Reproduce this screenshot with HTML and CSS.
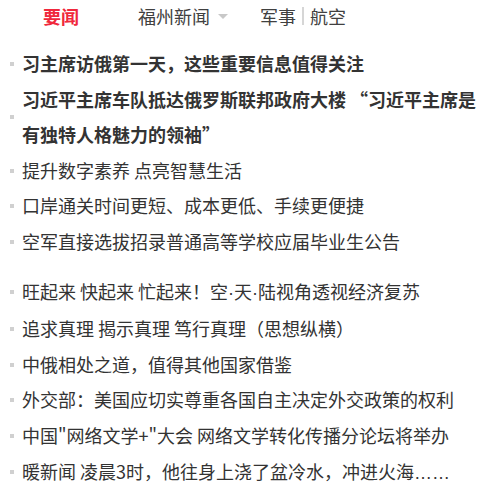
FILE: index.html
```html
<!DOCTYPE html>
<html lang="zh-CN">
<head>
<meta charset="utf-8">
<link rel="stylesheet" href="styles.css">
</head>
<body>
<div class="page">
  <div class="tabs">
    <span class="tab tab-active">要闻</span>
    <span class="tab tab-drop">福州新闻<span class="caret"></span></span>
    <span class="tab tab-pair">军事<span class="sep"></span>航空</span>
  </div>
  <ul class="news">
    <li class="item strong"><span class="dot"></span><span class="txt">习主席访俄第一天，这些重要信息值得关注</span></li>
    <li class="item strong"><span class="dot"></span><span class="txt">习近平主席车队抵达俄罗斯联邦政府大楼 “习近平主席是有独特人格魅力的领袖”</span></li>
    <li class="item"><span class="dot"></span><span class="txt">提升数字素养 点亮智慧生活</span></li>
    <li class="item"><span class="dot"></span><span class="txt">口岸通关时间更短、成本更低、手续更便捷</span></li>
    <li class="item"><span class="dot"></span><span class="txt">空军直接选拔招录普通高等学校应届毕业生公告</span></li>
  </ul>
  <ul class="news news-second">
    <li class="item"><span class="dot"></span><span class="txt">旺起来 快起来 忙起来！空<span class="latin">·</span>天<span class="latin">·</span>陆视角透视经济复苏</span></li>
    <li class="item"><span class="dot"></span><span class="txt">追求真理 揭示真理 笃行真理（思想纵横）</span></li>
    <li class="item"><span class="dot"></span><span class="txt">中俄相处之道，值得其他国家借鉴</span></li>
    <li class="item"><span class="dot"></span><span class="txt">外交部：美国应切实尊重各国自主决定外交政策的权利</span></li>
    <li class="item"><span class="dot"></span><span class="txt">中国"网络文学+"大会 网络文学转化传播分论坛将举办</span></li>
    <li class="item"><span class="dot"></span><span class="txt">暖新闻 凌晨3时，他往身上浇了盆冷水，冲进火海<span class="latin">……</span></span></li>
  </ul>
</div>
</body>
</html>
```
FILE: styles.css
```css
html, body {
  margin: 0;
  padding: 0;
  background: #fff;
}
.page {
  width: 483px;
  font-family: "Noto Sans CJK SC", "Noto Sans", "Liberation Sans", sans-serif;
  font-size: 18px;
  color: #333;
}
.tabs {
  display: flex;
  align-items: center;
  height: 32px;
  padding-left: 43px;
}
.tab {
  display: flex;
  align-items: center;
  line-height: 32px;
  color: #404040;
}
.tab-active {
  color: #f0283c;
  font-weight: 700;
}
.tab-drop {
  margin-left: 59px;
}
.caret {
  width: 0;
  height: 0;
  margin-left: 8px;
  border-left: 5px solid transparent;
  border-right: 5px solid transparent;
  border-top: 5px solid #c8c8c8;
}
.tab-pair {
  margin-left: 32px;
}
.sep {
  width: 2px;
  height: 18px;
  margin: 0 6px;
  background: #d6d6d6;
}
.news {
  list-style: none;
  margin: 0;
  padding: 14px 0 0 10px;
}
.news-second {
  padding-top: 14px;
}
.item {
  display: flex;
  align-items: center;
  gap: 8px;
  line-height: 35.6px;
}
.strong .txt {
  font-weight: 700;
  color: #333;
}
.dot {
  flex: none;
  width: 4px;
  height: 4px;
  background: #d0d0d0;
}
.txt {
  flex: 1;
  min-width: 0;
}
.latin {
  font-family: "Liberation Sans", sans-serif;
}
```
